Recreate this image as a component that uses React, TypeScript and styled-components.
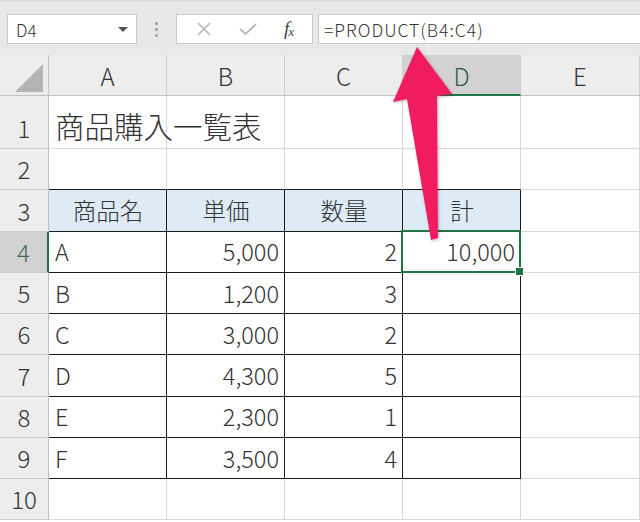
import React from "react";
import styled, { createGlobalStyle } from "styled-components";

const GlobalStyle = createGlobalStyle`
  html, body {
    margin: 0;
    padding: 0;
    background: #ffffff;
    overflow: hidden;
  }
  * {
    box-sizing: border-box;
  }
`;

const Page = styled.div`
  position: relative;
  width: 640px;
  height: 522px;
  overflow: hidden;
  font-family: "Noto Sans CJK JP", "Noto Sans", sans-serif;
  font-weight: 300;
  color: #333;
`;

const Toolbar = styled.div`
  height: 55px;
  background: #e8e8e8;
  border-top: 2px solid #dcdcdc;
  display: flex;
  align-items: flex-start;
  padding: 12px 0 0 7px;
`;

const Box = styled.div<{ $width: number }>`
  width: ${(p) => p.$width}px;
  height: 30px;
  background: #ffffff;
  border: 1px solid #c9c9c9;
  display: flex;
  align-items: center;
`;

const NameBox = styled(Box)`
  padding: 0 8px 0 8px;
  justify-content: space-between;
  font-size: 17px;
  color: #333;
`;

const Caret = styled.span`
  width: 0;
  height: 0;
  border-left: 5px solid transparent;
  border-right: 5px solid transparent;
  border-top: 5px solid #555;
`;

const Dots = styled.div`
  width: 39px;
  height: 30px;
  display: flex;
  flex-direction: column;
  align-items: center;
  justify-content: center;
  gap: 3px;

  span {
    width: 3px;
    height: 3px;
    border-radius: 50%;
    background: #9a9a9a;
  }
`;

const Buttons = styled(Box)`
  justify-content: space-around;
  padding: 0 6px;
  margin-right: 5px;
`;

const Fx = styled.span`
  font-family: "Liberation Serif", "Times New Roman", serif;
  font-style: italic;
  font-weight: 400;
  font-size: 19px;
  color: #444;
  letter-spacing: -1px;

  sub {
    font-size: 13px;
    vertical-align: -1px;
  }
`;

const FormulaBox = styled(Box)`
  flex: 1;
  border-right: none;
  padding-left: 5px;
  font-size: 17.5px;
  color: #333;
  letter-spacing: 1px;
`;

const Sheet = styled.div`
  display: grid;
  grid-template-columns: 49px 118px 118px 118px 118px 1fr;
  grid-template-rows: 41px 53px repeat(9, 41.25px);
`;

const Corner = styled.div`
  background: #ededed;
  border-right: 1px solid #c4c4c4;
  border-bottom: 1px solid #c4c4c4;
  position: relative;

  &::after {
    content: "";
    position: absolute;
    right: 5px;
    bottom: 3px;
    width: 0;
    height: 0;
    border-left: 28px solid transparent;
    border-bottom: 28px solid #b4b4b4;
  }
`;

const ColHeader = styled.div<{ $active?: boolean }>`
  background: ${(p) => (p.$active ? "#d2d2d2" : "#ededed")};
  border-right: 1px solid #cdcdcd;
  border-bottom: ${(p) => (p.$active ? "2px solid #217346" : "1px solid #c4c4c4")};
  display: flex;
  align-items: center;
  justify-content: center;
  padding-top: ${(p) => (p.$active ? "3px" : "2px")};
  font-size: 24px;
  line-height: 1;
  color: ${(p) => (p.$active ? "#2f5d45" : "#333")};
`;

const RowHeader = styled.div<{ $active?: boolean }>`
  background: ${(p) => (p.$active ? "#d2d2d2" : "#ededed")};
  border-right: ${(p) => (p.$active ? "2px solid #217346" : "1px solid #bdbdbd")};
  border-bottom: 1px solid #cdcdcd;
  display: flex;
  align-items: flex-end;
  justify-content: center;
  padding-bottom: 8px;
  font-size: 24px;
  line-height: 1;
  color: ${(p) => (p.$active ? "#3d6b52" : "#333")};
`;

type Edge = "grid" | "ink";

const edgeColor = (e?: Edge) => (e === "ink" ? "#1a1a1a" : "#d9d9d9");

const Cell = styled.div<{
  $align?: "left" | "right" | "center";
  $fill?: boolean;
  $right?: Edge;
  $bottom?: Edge;
  $selected?: boolean;
  $big?: boolean;
}>`
  position: relative;
  background: ${(p) => (p.$fill ? "#ddebf7" : "#ffffff")};
  border-right: 1px solid ${(p) => edgeColor(p.$right)};
  border-bottom: 1px solid ${(p) => edgeColor(p.$bottom)};
  display: flex;
  align-items: flex-end;
  justify-content: ${(p) =>
    p.$align === "right" ? "flex-end" : p.$align === "center" ? "center" : "flex-start"};
  padding: 0 5px 8px 6px;
  font-size: ${(p) => (p.$big ? "29.5px" : "23.5px")};
  line-height: 1;
  white-space: nowrap;
  overflow: visible;
  color: #333;
  z-index: ${(p) => (p.$selected ? 2 : p.$big ? 1 : "auto")};

  ${(p) =>
    p.$selected &&
    `
    &::after {
      content: "";
      position: absolute;
      top: -2px;
      left: -2px;
      right: -1px;
      bottom: -1px;
      border: 2px solid #217346;
      pointer-events: none;
    }
    &::before {
      content: "";
      position: absolute;
      right: -4px;
      bottom: -4px;
      width: 7px;
      height: 7px;
      background: #217346;
      border: 1px solid #ffffff;
      z-index: 3;
    }
  `}
`;

const Arrow = styled.svg`
  position: absolute;
  left: 0;
  top: 0;
  pointer-events: none;
  z-index: 10;
`;

const columns = ["A", "B", "C", "D", "E"];

const items: [string, string, string][] = [
  ["A", "5,000", "2"],
  ["B", "1,200", "3"],
  ["C", "3,000", "2"],
  ["D", "4,300", "5"],
  ["E", "2,300", "1"],
  ["F", "3,500", "4"],
];

export default function App() {
  return (
    <Page>
      <GlobalStyle />
      <Toolbar>
        <NameBox $width={130}>
          <span>D4</span>
          <Caret />
        </NameBox>
        <Dots>
          <span />
          <span />
          <span />
        </Dots>
        <Buttons $width={137}>
          <svg width="16" height="16" viewBox="0 0 16 16">
            <path d="M2 2 L14 14 M14 2 L2 14" stroke="#b9b9b9" strokeWidth="1.6" fill="none" />
          </svg>
          <svg width="20" height="16" viewBox="0 0 20 16">
            <path d="M2 8 L7.5 13 L18 3" stroke="#b9b9b9" strokeWidth="2" fill="none" />
          </svg>
          <Fx>
            f<sub>x</sub>
          </Fx>
        </Buttons>
        <FormulaBox $width={323}>=PRODUCT(B4:C4)</FormulaBox>
      </Toolbar>

      <Sheet>
        <Corner />
        {columns.map((c) => (
          <ColHeader key={c} $active={c === "D"}>
            {c}
          </ColHeader>
        ))}

        <RowHeader>1</RowHeader>
        <Cell $big>商品購入一覧表</Cell>
        <Cell />
        <Cell />
        <Cell />
        <Cell />

        <RowHeader>2</RowHeader>
        <Cell $bottom="ink" />
        <Cell $bottom="ink" />
        <Cell $bottom="ink" />
        <Cell $bottom="ink" />
        <Cell />

        <RowHeader>3</RowHeader>
        {["商品名", "単価", "数量", "計"].map((h) => (
          <Cell key={h} $fill $align="center" $right="ink" $bottom="ink">
            {h}
          </Cell>
        ))}
        <Cell />

        {items.map(([name, price, qty], i) => (
          <React.Fragment key={name}>
            <RowHeader $active={i === 0}>{i + 4}</RowHeader>
            <Cell $right="ink" $bottom="ink">
              {name}
            </Cell>
            <Cell $align="right" $right="ink" $bottom="ink">
              {price}
            </Cell>
            <Cell $align="right" $right="ink" $bottom="ink">
              {qty}
            </Cell>
            <Cell $align="right" $right="ink" $bottom="ink" $selected={i === 0}>
              {i === 0 ? "10,000" : ""}
            </Cell>
            <Cell />
          </React.Fragment>
        ))}

        <RowHeader>10</RowHeader>
        <Cell />
        <Cell />
        <Cell />
        <Cell />
        <Cell />
      </Sheet>

      <Arrow width="640" height="522" viewBox="0 0 640 522">
        <defs>
          <filter id="shadow" x="-20%" y="-20%" width="140%" height="140%">
            <feDropShadow dx="1" dy="1" stdDeviation="1.5" floodColor="#000" floodOpacity="0.3" />
          </filter>
        </defs>
        <polygon
          points="417,47 452,94 437,96 438,238 431,240 407,99 393,102"
          fill="#f01b5e"
          filter="url(#shadow)"
        />
      </Arrow>
    </Page>
  );
}
